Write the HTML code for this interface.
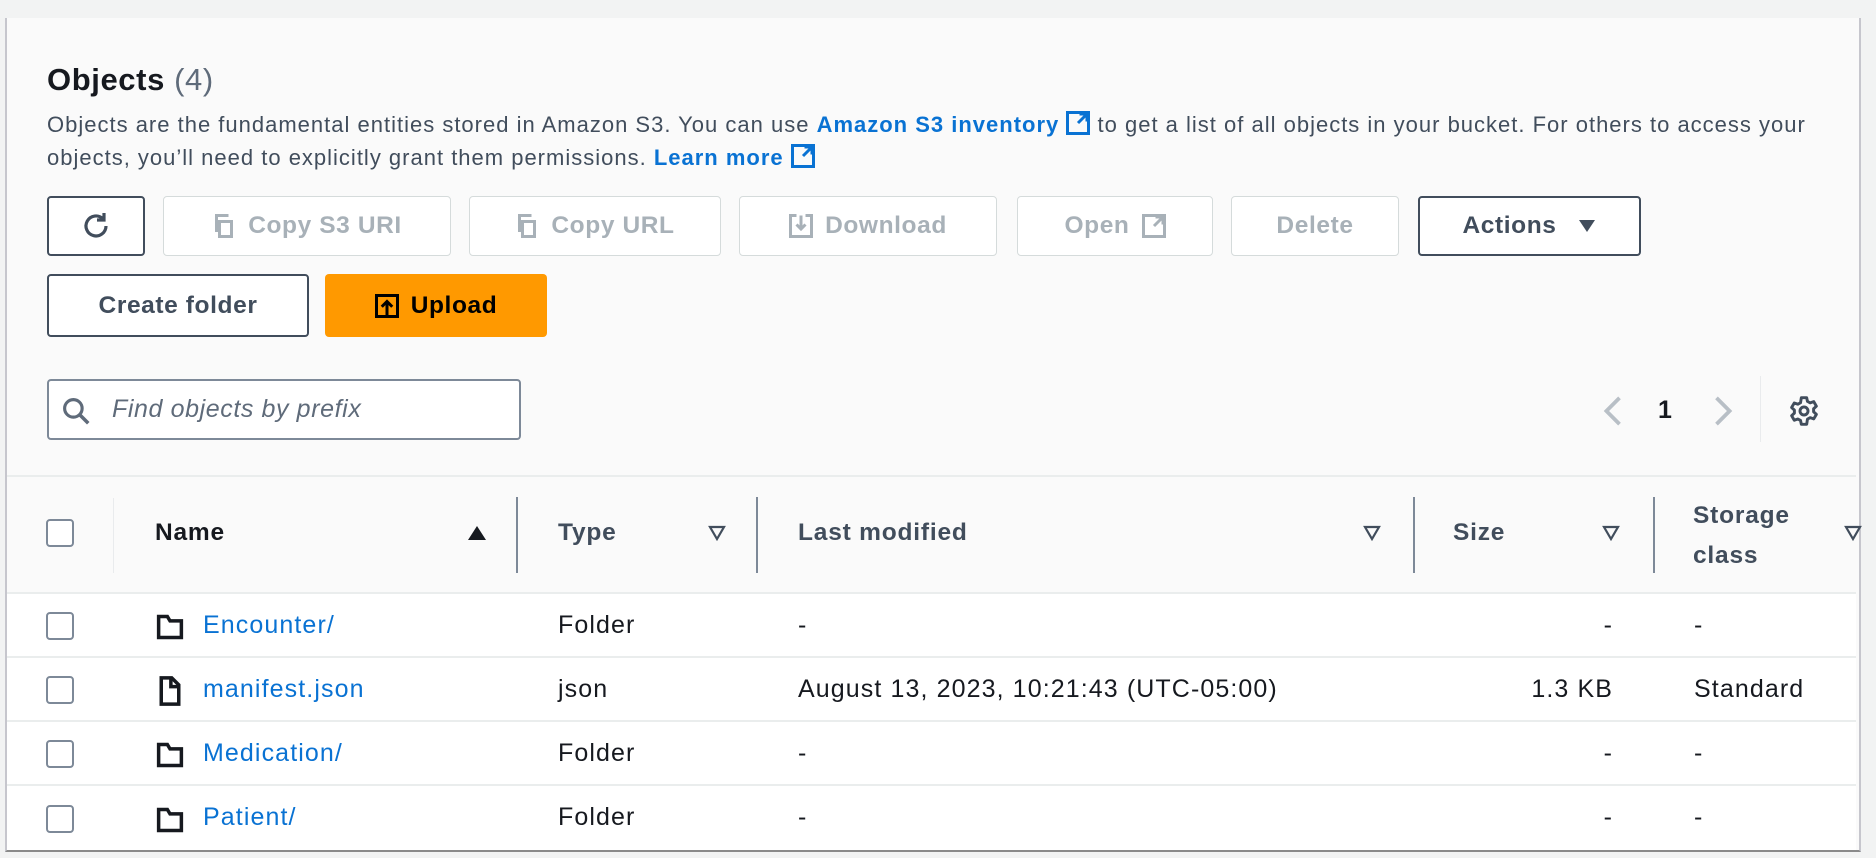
<!DOCTYPE html>
<html><head><meta charset="utf-8">
<style>
*{box-sizing:border-box;margin:0;padding:0}
body{width:1876px;height:858px;background:#f2f3f3;font-family:"Liberation Sans",sans-serif;color:#16191f;position:relative;overflow:hidden}
.panel{position:absolute;left:5px;top:18px;width:1856px;height:834px;background:#fafafa;border-left:2px solid #c6c6cd;border-right:2px solid #c6c6cd;border-bottom:2px solid #8a8a8a}
.a{position:absolute;white-space:nowrap}
.btn{position:absolute;display:flex;align-items:center;justify-content:center;gap:12px;font-weight:bold;font-size:24.5px;letter-spacing:0.6px;border-radius:4px;background:#fff}
.en{border:2px solid #414d5c;color:#414d5c}
.dis{border:1.5px solid #d5dbdb;color:#a8b1b8}
.link{color:#0972d3;font-weight:bold}
.row{position:absolute;left:7px;width:1849px;height:64px;border-top:2px solid #eaeded;background:#fff}
.cb{position:absolute;left:46px;width:28px;height:28px;border:2px solid #7d8998;border-radius:4px;background:#fff}
.td{position:absolute;font-size:25px;letter-spacing:1.1px;white-space:nowrap}
.r{text-align:right;width:200px}
.th{position:absolute;font-size:24.5px;letter-spacing:0.8px;font-weight:bold;color:#414d5c;white-space:nowrap}
.div{position:absolute;width:2px;background:#7d8998}
.tri{position:absolute}
.desc{font-size:22px;color:#414d5c;letter-spacing:1px}
</style></head><body>
<div class="panel"></div>
<div class="a" style="left:47px;top:62px;font-size:31px;letter-spacing:0.6px;font-weight:bold">Objects <span style="font-weight:normal;color:#5f6b7a">(4)</span></div>
<div class="a desc" style="left:47px;top:111px">Objects are the fundamental entities stored in Amazon S3. You can use <span class="link">Amazon S3 inventory <svg width="24" height="24" viewBox="0 0 16 16" style="vertical-align:-3px"><path d="M1 1h14v14H1z" fill="none" stroke="#0972d3" stroke-width="2"/><path d="M8 8l6-6M9 2h5v5" fill="none" stroke="#0972d3" stroke-width="2"/></svg></span> to get a list of all objects in your bucket. For others to access your</div>
<div class="a desc" style="left:47px;top:144px">objects, you’ll need to explicitly grant them permissions. <span class="link">Learn more <svg width="24" height="24" viewBox="0 0 16 16" style="vertical-align:-3px"><path d="M1 1h14v14H1z" fill="none" stroke="#0972d3" stroke-width="2"/><path d="M8 8l6-6M9 2h5v5" fill="none" stroke="#0972d3" stroke-width="2"/></svg></span></div>

<div class="btn en" style="left:47px;top:196px;width:98px;height:60px"><svg width="32" height="32" viewBox="0 0 16 16"><path d="M13 8a5 5 0 1 1-1.5-3.6M12 1.5V5H8.5" fill="none" stroke="#414d5c" stroke-width="1.6"/></svg></div>
<div class="btn dis" style="left:163px;top:196px;width:288px;height:60px"><svg width="24" height="24" viewBox="0 0 16 16"><path d="M5 5h8v10H5zM3 12V1h8" fill="none" stroke="#a8b1b8" stroke-width="2"/></svg>Copy S3 URI</div>
<div class="btn dis" style="left:469px;top:196px;width:252px;height:60px"><svg width="24" height="24" viewBox="0 0 16 16"><path d="M5 5h8v10H5zM3 12V1h8" fill="none" stroke="#a8b1b8" stroke-width="2"/></svg>Copy URL</div>
<div class="btn dis" style="left:739px;top:196px;width:258px;height:60px"><svg width="24" height="24" viewBox="0 0 16 16"><path d="M5 1H1v14h14V1h-4M8 1v9M5 7l3 3 3-3" fill="none" stroke="#a8b1b8" stroke-width="2"/></svg>Download</div>
<div class="btn dis" style="left:1017px;top:196px;width:196px;height:60px">Open <svg width="24" height="24" viewBox="0 0 16 16"><path d="M1 1h14v14H1z" fill="none" stroke="#a8b1b8" stroke-width="2"/><path d="M8 8l6-6M9 2h5v5" fill="none" stroke="#a8b1b8" stroke-width="2"/></svg></div>
<div class="btn dis" style="left:1231px;top:196px;width:168px;height:60px">Delete</div>
<div class="btn en" style="left:1418px;top:196px;width:223px;height:60px">Actions <svg width="20" height="14" viewBox="0 0 20 14" style="margin-left:8px"><path d="M2 1h16L10 13z" fill="#414d5c"/></svg></div>

<div class="btn en" style="left:47px;top:274px;width:262px;height:63px">Create folder</div>
<div class="btn" style="left:325px;top:274px;width:222px;height:63px;background:#ff9900;color:#000"><svg width="24" height="24" viewBox="0 0 16 16"><path d="M1 1h14v14H1z" fill="none" stroke="#000" stroke-width="2"/><path d="M8 14V5M4.5 8.5 8 5l3.5 3.5" fill="none" stroke="#000" stroke-width="2"/></svg>Upload</div>

<div class="a" style="left:47px;top:379px;width:474px;height:61px;border:2px solid #7d8998;border-radius:4px;background:#fff"></div>
<svg class="a" style="left:62px;top:397px" width="28" height="28" viewBox="0 0 16 16"><circle cx="6.5" cy="6.5" r="5" fill="none" stroke="#5f6b7a" stroke-width="1.8"/><path d="M10 10l5 5" stroke="#5f6b7a" stroke-width="2"/></svg>
<div class="a" style="left:112px;top:395px;font-size:25px;letter-spacing:0.6px;font-style:italic;color:#5f6b7a">Find objects by prefix</div>

<svg class="a" style="left:1600px;top:396px" width="24" height="30" viewBox="0 0 12 16"><path d="M10 1 3 8l7 7" fill="none" stroke="#b8bfc6" stroke-width="2"/></svg>
<div class="a" style="left:1658px;top:396px;font-size:25px;font-weight:bold">1</div>
<svg class="a" style="left:1712px;top:396px" width="24" height="30" viewBox="0 0 12 16"><path d="M2 1l7 7-7 7" fill="none" stroke="#b8bfc6" stroke-width="2"/></svg>
<div class="a" style="left:1760px;top:376px;width:1px;height:66px;background:#e9ebed"></div>
<svg class="a" style="left:1788px;top:395px" width="32" height="32" viewBox="0 0 24 24"><path d="M10 2h4l.6 2.8 2 1.1 2.7-.9 2 3.4-2.1 1.9v2.3l2.1 1.9-2 3.4-2.7-.9-2 1.1L14 22h-4l-.6-2.9-2-1.1-2.7.9-2-3.4 2.1-1.9v-2.3L2.7 9.4l2-3.4 2.7.9 2-1.1z" fill="none" stroke="#414d5c" stroke-width="2.2" stroke-linejoin="round"/><circle cx="12" cy="12" r="3" fill="none" stroke="#414d5c" stroke-width="2.2"/></svg>

<div class="a" style="left:7px;top:475px;width:1849px;height:2px;background:#eaeded"></div>
<div class="cb" style="top:519px"></div>
<div class="a" style="left:113px;top:498px;width:1px;height:75px;background:#e9ebed"></div>
<div class="th" style="left:155px;top:519px;color:#16191f">Name</div>
<svg class="tri" style="left:467px;top:525px" width="20" height="16"><path d="M1 15h18L10 1z" fill="#16191f"/></svg>
<div class="div" style="left:516px;top:497px;height:76px"></div>
<div class="th" style="left:558px;top:519px">Type</div>
<svg class="tri" style="left:708px;top:525px" width="18" height="16"><path d="M2 2h14L9 14z" fill="none" stroke="#414d5c" stroke-width="2.2"/></svg>
<div class="div" style="left:756px;top:497px;height:76px"></div>
<div class="th" style="left:798px;top:519px">Last modified</div>
<svg class="tri" style="left:1363px;top:525px" width="18" height="16"><path d="M2 2h14L9 14z" fill="none" stroke="#414d5c" stroke-width="2.2"/></svg>
<div class="div" style="left:1413px;top:497px;height:76px"></div>
<div class="th" style="left:1453px;top:519px">Size</div>
<svg class="tri" style="left:1602px;top:525px" width="18" height="16"><path d="M2 2h14L9 14z" fill="none" stroke="#414d5c" stroke-width="2.2"/></svg>
<div class="div" style="left:1653px;top:497px;height:76px"></div>
<div class="th" style="left:1693px;top:496px;line-height:40px">Storage<br>class</div>
<svg class="tri" style="left:1844px;top:525px" width="18" height="16"><path d="M2 2h14L9 14z" fill="none" stroke="#414d5c" stroke-width="2.2"/></svg>

<div class="row" style="top:592px"></div>
<div class="row" style="top:656px"></div>
<div class="row" style="top:720px"></div>
<div class="row" style="top:784px;height:66px"></div>

<div class="cb" style="top:612px"></div>
<svg class="a" style="left:156px;top:613px" width="28" height="28" viewBox="0 0 16 16"><path d="M1.5 2h5l1.5 2.5h6.5v9.5h-13z" fill="none" stroke="#16191f" stroke-width="2"/></svg>
<div class="td" style="left:203px;top:611px;color:#0972d3">Encounter/</div>
<div class="td" style="left:558px;top:611px">Folder</div>
<div class="td" style="left:798px;top:611px">-</div>
<div class="td r" style="left:1413px;top:611px">-</div>
<div class="td" style="left:1694px;top:611px">-</div>

<div class="cb" style="top:676px"></div>
<svg class="a" style="left:156px;top:676px" width="28" height="30" viewBox="0 0 16 17"><path d="M3 1h6l4 4v11H3z" fill="none" stroke="#16191f" stroke-width="2"/><path d="M8.5 1v5h4.5" fill="none" stroke="#16191f" stroke-width="2"/></svg>
<div class="td" style="left:203px;top:675px;color:#0972d3">manifest.json</div>
<div class="td" style="left:558px;top:675px">json</div>
<div class="td" style="left:798px;top:675px">August 13, 2023, 10:21:43 (UTC-05:00)</div>
<div class="td r" style="left:1413px;top:675px">1.3 KB</div>
<div class="td" style="left:1694px;top:675px">Standard</div>

<div class="cb" style="top:740px"></div>
<svg class="a" style="left:156px;top:741px" width="28" height="28" viewBox="0 0 16 16"><path d="M1.5 2h5l1.5 2.5h6.5v9.5h-13z" fill="none" stroke="#16191f" stroke-width="2"/></svg>
<div class="td" style="left:203px;top:739px;color:#0972d3">Medication/</div>
<div class="td" style="left:558px;top:739px">Folder</div>
<div class="td" style="left:798px;top:739px">-</div>
<div class="td r" style="left:1413px;top:739px">-</div>
<div class="td" style="left:1694px;top:739px">-</div>

<div class="cb" style="top:805px"></div>
<svg class="a" style="left:156px;top:806px" width="28" height="28" viewBox="0 0 16 16"><path d="M1.5 2h5l1.5 2.5h6.5v9.5h-13z" fill="none" stroke="#16191f" stroke-width="2"/></svg>
<div class="td" style="left:203px;top:803px;color:#0972d3">Patient/</div>
<div class="td" style="left:558px;top:803px">Folder</div>
<div class="td" style="left:798px;top:803px">-</div>
<div class="td r" style="left:1413px;top:803px">-</div>
<div class="td" style="left:1694px;top:803px">-</div>
</body></html>
